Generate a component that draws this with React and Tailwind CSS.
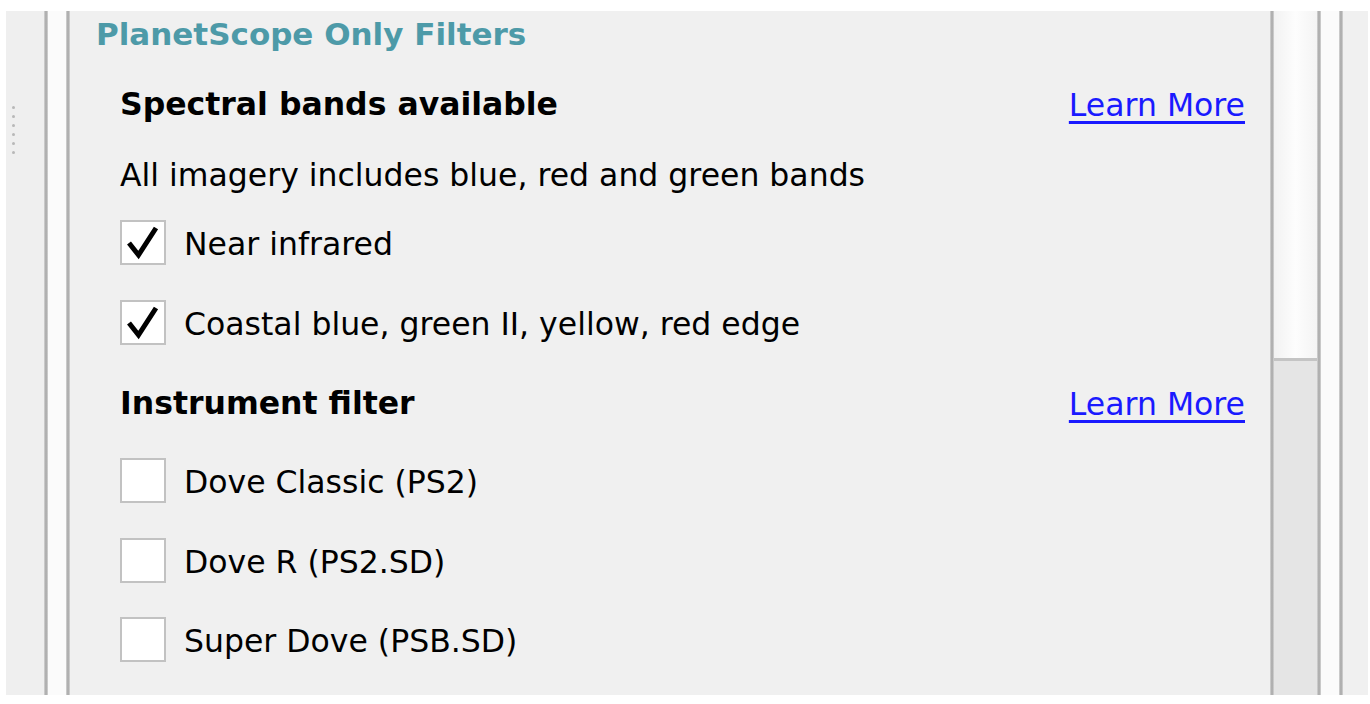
import React from "react";

const Divider = () => (
  <div className="w-[4px] shrink-0 bg-gradient-to-r from-[#d6d6d6] via-[#a4a4a4] to-[#d6d6d6]" />
);

const CheckBox = ({ checked }) => (
  <div className="w-[46px] h-[45px] shrink-0 bg-white border-2 border-[#c2c2c2] flex items-center justify-center">
    {checked && (
      <svg width="42" height="41" viewBox="0 0 42 41">
        <path
          d="M7 21 L16.5 33 L34 6"
          fill="none"
          stroke="#000"
          strokeWidth="5"
          strokeLinejoin="miter"
        />
      </svg>
    )}
  </div>
);

const CheckRow = ({ label, checked, className }) => (
  <div className={`h-[46px] flex items-center gap-[18px] ${className}`}>
    <CheckBox checked={checked} />
    <span className="pt-[5px]">{label}</span>
  </div>
);

const Heading = ({ children, className }) => (
  <div className={`h-[46px] flex items-center justify-between ${className}`}>
    <span className="font-bold pt-[2px]">{children}</span>
    <a href="#" className="pt-[3px] text-[#1a1aff] underline underline-offset-[5px] decoration-[3px]">
      Learn More
    </a>
  </div>
);

export default function App() {
  return (
    <div className="w-[1370px] h-[704px] bg-white pt-[11px] pl-[6px] overflow-hidden font-['DejaVu_Sans',sans-serif]">
      <div className="flex h-[684px] w-[1362px]">
        {/* left dock area */}
        <div className="w-[38px] shrink-0 bg-[#efefef] pt-[95px] pl-[6px]">
          <div className="flex flex-col gap-[6px]">
            {[0, 1, 2, 3, 4, 5].map((i) => (
              <div key={i} className="w-[3px] h-[3px] rounded-full bg-[#b8b8b8]" />
            ))}
          </div>
        </div>
        <Divider />
        <div className="w-[18px] shrink-0 bg-[#fbfbfb]" />
        <Divider />

        {/* filter panel */}
        <div className="w-[1200px] shrink-0 bg-[#f0f0f0] pl-[26px] pr-[25px] text-[31.5px] text-black leading-none">
          <div className="h-[46px] flex items-center font-bold text-[31px] text-[#4d9aa8]">
            PlanetScope Only Filters
          </div>
          <div className="pl-[24px]">
            <Heading className="mt-[24px]">Spectral bands available</Heading>
            <div className="h-[46px] flex items-center mt-[24px] pt-[3px]">
              All imagery includes blue, red and green bands
            </div>
            <CheckRow className="mt-[22px]" checked label="Near infrared" />
            <CheckRow className="mt-[34px]" checked label="Coastal blue, green II, yellow, red edge" />
            <Heading className="mt-[35px]">Instrument filter</Heading>
            <CheckRow className="mt-[31px]" label="Dove Classic (PS2)" />
            <CheckRow className="mt-[34px]" label="Dove R (PS2.SD)" />
            <CheckRow className="mt-[33px]" label="Super Dove (PSB.SD)" />
          </div>
        </div>

        {/* scrollbar */}
        <Divider />
        <div className="w-[43px] shrink-0 flex flex-col">
          <div className="h-[347px] bg-gradient-to-r from-[#f2f2f2] via-[#fdfdfd] to-[#f4f4f4]" />
          <div className="h-[3px] bg-[#c4c4c4]" />
          <div className="flex-1 bg-[#e5e5e5]" />
        </div>
        <Divider />
        <div className="w-[18px] shrink-0 bg-[#fbfbfb]" />
        <Divider />
        <div className="w-[25px] shrink-0 bg-[#f0f0f0]" />
      </div>
    </div>
  );
}
